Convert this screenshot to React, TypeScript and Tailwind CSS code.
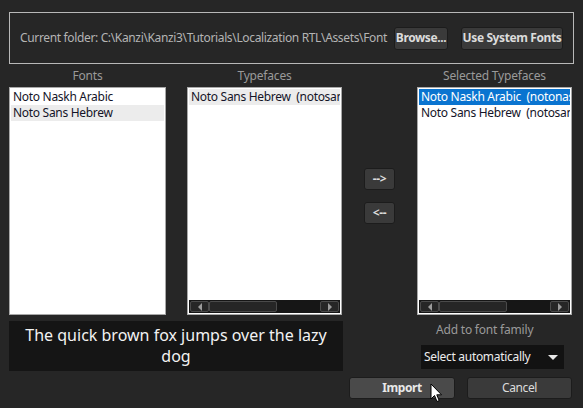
import React from 'react'

const ui = { fontFamily: '"Noto Sans", "Open Sans", sans-serif' }

function ListBox({
  items,
  selected = -1,
  hover = -1,
  scroll = false,
}: {
  items: string[]
  selected?: number
  hover?: number
  scroll?: boolean
}) {
  return (
    <div className="flex h-[228px] w-full flex-col border border-[#a8a8a8] bg-white p-px">
      <div className="flex-1 overflow-hidden">
        {items.map((t, i) => (
          <div
            key={t}
            className={`h-[16px] whitespace-pre pl-[2px] text-[12px] leading-[16px] tracking-[-0.3px] ${
              i === selected
                ? 'bg-[#0a74d0] text-white'
                : i === hover
                  ? 'bg-[#ececec] text-[#141428]'
                  : 'text-[#141428]'
            }`}
          >
            {t}
          </div>
        ))}
      </div>
      {scroll && (
        <div className="flex h-[13px] items-center bg-[#161616] px-px">
          <div className="flex h-[11px] w-[19px] items-center justify-center rounded-[2px] border border-[#4a4a4a] bg-[#262626]">
            <span className="h-0 w-0 border-y-[4px] border-r-[4px] border-y-transparent border-r-[#9a9a9a]" />
          </div>
          <div className="h-[11px] w-[68px] rounded-[2px] border border-[#4a4a4a] bg-[#262626]" />
          <div className="flex-1" />
          <div className="flex h-[11px] w-[19px] items-center justify-center rounded-[2px] border border-[#4a4a4a] bg-[#262626]">
            <span className="h-0 w-0 border-y-[4px] border-l-[4px] border-y-transparent border-l-[#9a9a9a]" />
          </div>
        </div>
      )}
    </div>
  )
}

function Column({ label, wide = false, children }: { label: string; wide?: boolean; children: React.ReactNode }) {
  return (
    <div className={`flex flex-col ${wide ? 'w-[157px]' : 'w-[155px]'}`}>
      <div className="flex h-[23px] items-center justify-center text-[12px] tracking-[-0.2px] text-[#9a9a9a]">{label}</div>
      {children}
    </div>
  )
}

const darkBtn =
  'whitespace-nowrap rounded-[3px] border border-[#1c1c1c] bg-[#3a3a3a] text-[12px] tracking-[-0.4px] text-[#dcdcdc]'

export default function App() {
  return (
    <div style={ui} className="relative flex h-[408px] w-[583px] flex-col overflow-hidden bg-[#262626] px-[9px] pt-[12px]">
      {/* Folder bar */}
      <div className="flex h-[52px] items-center border border-[#b8b8b8] pl-[10px] pr-[10px]">
        <span className="whitespace-nowrap text-[12px] tracking-[-0.35px] text-[#b4b4b4]">
          Current folder: C:\Kanzi\Kanzi3\Tutorials\Localization RTL\Assets\Font
        </span>
        <div className="ml-auto flex gap-[13px]">
          <button className={`${darkBtn} h-[23px] w-[54px] font-bold`}>Browse...</button>
          <button className={`${darkBtn} h-[23px] w-[102px] font-bold`}>Use System Fonts</button>
        </div>
      </div>

      {/* Lists */}
      <div className="flex">
        <Column label="Fonts" wide>
          <ListBox items={['Noto Naskh Arabic', 'Noto Sans Hebrew']} hover={1} />
        </Column>
        <div className="ml-[21px]">
          <Column label="Typefaces">
            <ListBox items={['Noto Sans Hebrew  (notosanshebrew)']} hover={0} scroll />
          </Column>
        </div>
        <div className="flex w-[75px] flex-col items-center gap-[12px] pt-[104px]">
          <button className={`${darkBtn} h-[22px] w-[31px] text-[11px] font-bold text-[#c8c8c8]`}>--&gt;</button>
          <button className={`${darkBtn} h-[22px] w-[31px] text-[11px] font-bold text-[#c8c8c8]`}>&lt;--</button>
        </div>
        <Column label="Selected Typefaces">
          <ListBox
            items={['Noto Naskh Arabic  (notonaskharabic)', 'Noto Sans Hebrew  (notosanshebrew)']}
            selected={0}
            scroll
          />
        </Column>
      </div>

      {/* Bottom */}
      <div className="mt-[6px] flex">
        <div className="flex h-[50px] w-[334px] items-center justify-center bg-[#151515] px-[4px] text-center text-[16px] leading-[21px] text-[#f2f2f2]">
          The quick brown fox jumps over the lazy dog
        </div>
        <div className="ml-[6px] flex w-[223px] flex-col">
          <div className="ml-[87px] mt-[1px] h-[16px] whitespace-nowrap text-[12px] leading-[16px] tracking-[-0.2px] text-[#9a9a9a]">
            Add to font family
          </div>
          <div className="ml-[72px] mt-[7px] flex h-[24px] w-[143px] items-center justify-between bg-[#121212] pl-[3px] pr-[6px]">
            <span className="whitespace-nowrap text-[12px] tracking-[-0.3px] text-[#ececec]">Select automatically</span>
            <span className="h-0 w-0 border-x-[5px] border-t-[5px] border-x-transparent border-t-[#e8e8e8]" />
          </div>
          <div className="mt-[8px] flex gap-[12px]">
            <button className={`${darkBtn} h-[22px] w-[106px] bg-[#4a4a4a] font-bold text-[#e8e8e8]`}>Import</button>
            <button className={`${darkBtn} h-[22px] w-[105px] text-[#d0d0d0]`}>Cancel</button>
          </div>
        </div>
      </div>

      {/* mouse cursor */}
      <svg className="absolute left-[430px] top-[383px]" width="13" height="20" viewBox="0 0 13 20">
        <path d="M1 1 L1 16 L4.5 12.5 L7 18.5 L9.2 17.6 L6.8 11.8 L11.5 11.8 Z" fill="#fff" stroke="#000" strokeWidth="1" />
      </svg>
    </div>
  )
}
